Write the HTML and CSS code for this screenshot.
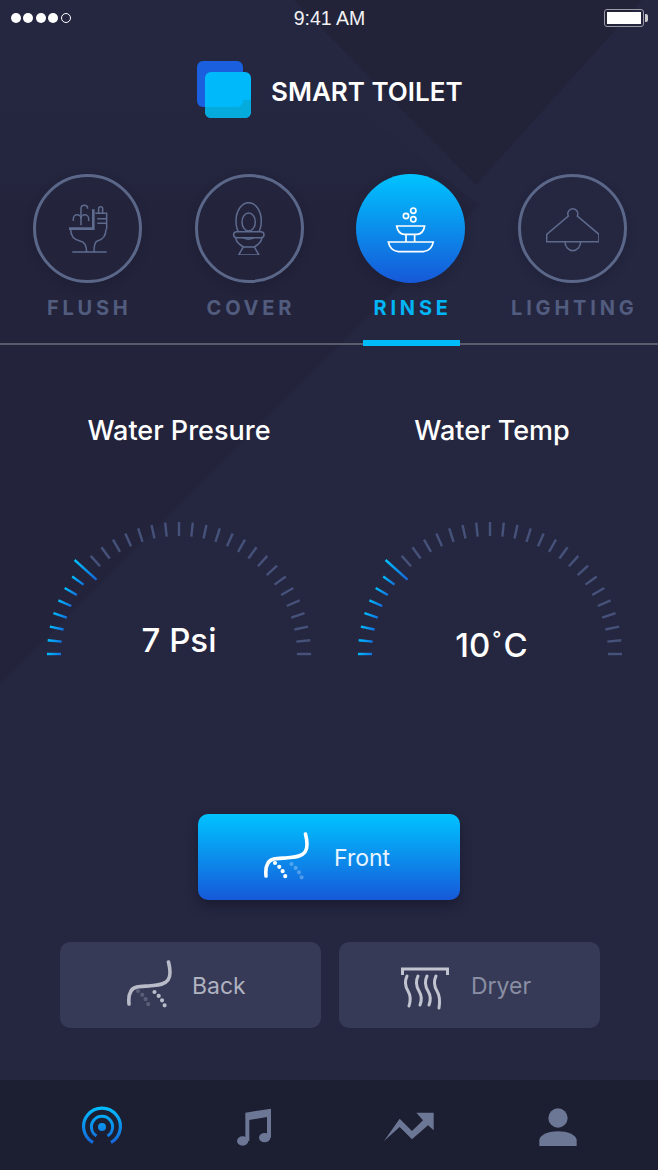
FILE: index.html
```html
<!DOCTYPE html>
<html lang="en">
  <head>
    <meta charset="UTF-8" />
    <meta name="viewport" content="width=device-width, initial-scale=1.0" />
    <title>Smart Toilet</title>

    <link rel="stylesheet" href="styles.css">
  </head>

  <body>
    <!-- shared svg parts -->
    <svg class="defs" width="0" height="0">
      <defs>
        <linearGradient id="tickActive" gradientUnits="userSpaceOnUse" x1="9" y1="0" x2="23" y2="0">
          <stop offset="0" stop-color="#00bdff" />
          <stop offset="1" stop-color="#1272e0" />
        </linearGradient>
        <linearGradient id="tickLong" gradientUnits="userSpaceOnUse" x1="0" y1="0" x2="30" y2="0">
          <stop offset="0" stop-color="#00c3ff" />
          <stop offset="1" stop-color="#1565d8" />
        </linearGradient>
        <linearGradient id="navBlue" gradientUnits="userSpaceOnUse" x1="0" y1="-20" x2="0" y2="17">
          <stop offset="0" stop-color="#00bdff" />
          <stop offset="1" stop-color="#1565d8" />
        </linearGradient>
        <linearGradient id="facetFade" gradientUnits="userSpaceOnUse" x1="0" y1="90" x2="0" y2="210">
          <stop offset="0" stop-color="#252741" />
          <stop offset="1" stop-color="#23243c" />
        </linearGradient>
        <symbol id="gauge" viewBox="0 0 282 144">
          <g class="ticks-on" stroke="url(#tickActive)">
            <line x1="9" y1="141" x2="23" y2="141" />
            <line x1="9" y1="141" x2="23" y2="141" transform="rotate(6 141 141)" />
            <line x1="9" y1="141" x2="23" y2="141" transform="rotate(12 141 141)" />
            <line x1="9" y1="141" x2="23" y2="141" transform="rotate(18 141 141)" />
            <line x1="9" y1="141" x2="23" y2="141" transform="rotate(24 141 141)" />
            <line x1="9" y1="141" x2="23" y2="141" transform="rotate(30 141 141)" />
            <line x1="9" y1="141" x2="23" y2="141" transform="rotate(36 141 141)" />
            <line x1="0.5" y1="141" x2="30" y2="141" stroke="url(#tickLong)" transform="rotate(42 141 141)" />
          </g>
          <g class="ticks-off">
            <line x1="9" y1="141" x2="23" y2="141" transform="rotate(48 141 141)" />
            <line x1="9" y1="141" x2="23" y2="141" transform="rotate(54 141 141)" />
            <line x1="9" y1="141" x2="23" y2="141" transform="rotate(60 141 141)" />
            <line x1="9" y1="141" x2="23" y2="141" transform="rotate(66 141 141)" />
            <line x1="9" y1="141" x2="23" y2="141" transform="rotate(72 141 141)" />
            <line x1="9" y1="141" x2="23" y2="141" transform="rotate(78 141 141)" />
            <line x1="9" y1="141" x2="23" y2="141" transform="rotate(84 141 141)" />
            <line x1="9" y1="141" x2="23" y2="141" transform="rotate(90 141 141)" />
            <line x1="9" y1="141" x2="23" y2="141" transform="rotate(96 141 141)" />
            <line x1="9" y1="141" x2="23" y2="141" transform="rotate(102 141 141)" />
            <line x1="9" y1="141" x2="23" y2="141" transform="rotate(108 141 141)" />
            <line x1="9" y1="141" x2="23" y2="141" transform="rotate(114 141 141)" />
            <line x1="9" y1="141" x2="23" y2="141" transform="rotate(120 141 141)" />
            <line x1="9" y1="141" x2="23" y2="141" transform="rotate(126 141 141)" />
            <line x1="9" y1="141" x2="23" y2="141" transform="rotate(132 141 141)" />
            <line x1="9" y1="141" x2="23" y2="141" transform="rotate(138 141 141)" />
            <line x1="9" y1="141" x2="23" y2="141" transform="rotate(144 141 141)" />
            <line x1="9" y1="141" x2="23" y2="141" transform="rotate(150 141 141)" />
            <line x1="9" y1="141" x2="23" y2="141" transform="rotate(156 141 141)" />
            <line x1="9" y1="141" x2="23" y2="141" transform="rotate(162 141 141)" />
            <line x1="9" y1="141" x2="23" y2="141" transform="rotate(168 141 141)" />
            <line x1="9" y1="141" x2="23" y2="141" transform="rotate(174 141 141)" />
            <line x1="9" y1="141" x2="23" y2="141" transform="rotate(180 141 141)" />
          </g>
        </symbol>
      </defs>
    </svg>

    <div class="phone">
      <svg class="backdrop" viewBox="0 0 658 1080" width="658" height="1080">
        <polygon class="facet" points="0,685 480,205 300,60 0,60" />
        <polygon class="facet-dark" points="294,0 476,185 642,0" />
      </svg>

      <div class="status-bar">
        <div class="signal">
          <span class="dot"></span>
          <span class="dot"></span>
          <span class="dot"></span>
          <span class="dot"></span>
          <span class="dot empty"></span>
        </div>
        <div class="clock">9:41 AM</div>
        <div class="battery"><span class="battery-fill"></span></div>
      </div>

      <header class="brand">
        <svg class="brand-logo" width="56" height="58" viewBox="0 0 56 58">
          <rect x="1" y="1" width="46" height="46" rx="6" fill="#1a5fdd" />
          <rect x="9" y="12" width="46" height="46" rx="6" fill="#00b9fb" />
          <path d="M9 47 V52 a6 6 0 0 0 6 6 H49 a6 6 0 0 0 6 -6 V40 H47 V41 a6 6 0 0 1 -6 6 Z" fill="#06abde" />
        </svg>
        <h1>SMART TOILET</h1>
      </header>

      <nav class="tabs">
        <div class="tab">
          <div class="tab-circle">
            <svg class="tab-icon" width="53.3" height="53.3" viewBox="123 108 160 160">
              <path d="M157 258 H260" />
              <path d="M147 188 H220 V130" class="thick" />
              <path d="M152 190 C152 212 165 222 180 225 C196 228 200 240 200 258" />
              <path d="M258 190 C258 212 245 222 232 225 C224 228 222 240 222 258" />
              <path d="M226 142 H260 V190 M236 142 V128 A6 6 0 0 1 248 128 V142 M232 158 H258 M232 172 H258" />
              <path d="M183 178 V128 A10 10 0 0 1 203 128" />
              <path d="M160 165 V158 A11.5 11.5 0 0 1 183 158 M183 158 A11.5 11.5 0 0 1 206 158 V165" />
            </svg>
          </div>
          <div class="tab-label">FLUSH</div>
        </div>
        <div class="tab">
          <div class="tab-circle">
            <svg class="tab-icon" width="53.3" height="53.3" viewBox="607 108 160 160">
              <ellipse cx="687" cy="165" rx="38" ry="55" />
              <ellipse cx="687" cy="168" rx="20" ry="27" />
              <rect x="642" y="197" width="91" height="18" rx="9" fill="#222339" />
              <path d="M648 215 C650 232 662 238 672 243 H703 C713 238 725 232 727 215" />
              <path d="M671 243 L657 267 H718 L704 243" />
            </svg>
          </div>
          <div class="tab-label">COVER</div>
        </div>
        <div class="tab active">
          <div class="tab-circle">
            <svg class="tab-icon" width="53.3" height="53.3" viewBox="132 108 160 160">
              <circle cx="220" cy="134" r="8" />
              <circle cx="198" cy="150" r="8" />
              <circle cx="220" cy="160" r="8" />
              <path d="M170 180 H254 Q250 203 232 205 H192 Q174 203 170 180 Z" />
              <path d="M198 205 V228 M224 205 V228" />
              <path d="M145 228 H280 Q275 255 250 257 H175 Q150 255 145 228 Z" />
            </svg>
          </div>
          <div class="tab-label">RINSE</div>
        </div>
        <div class="tab">
          <div class="tab-circle">
            <svg class="tab-icon" width="53.3" height="53.3" viewBox="618 108 160 160">
              <path d="M685 150 A15 15 0 1 1 712 150 L777 205 V227 H620 V205 Z" />
              <path d="M675 227 A23.5 27 0 0 0 722 227" />
            </svg>
          </div>
          <div class="tab-label">LIGHTING</div>
        </div>
      </nav>

      <div class="tabs-line"><span class="tabs-indicator"></span></div>

      <section class="gauges">
        <div class="gauge-card">
          <h2>Water Presure</h2>
          <div class="gauge">
            <svg width="282" height="144"><use href="#gauge" /></svg>
            <div class="gauge-value">7 Psi</div>
          </div>
        </div>
        <div class="gauge-card gauge-temp">
          <h2>Water Temp</h2>
          <div class="gauge">
            <svg width="282" height="144"><use href="#gauge" /></svg>
            <div class="gauge-value temp-value">10<span class="deg">°</span>C</div>
          </div>
        </div>
      </section>

      <section class="modes">
        <button class="mode mode-front">
          <svg class="mode-icon" width="48" height="50" viewBox="0 0 48 50">
            <path class="curve" d="M43.5 2 C45.5 10 46 16 43 20 C39 25.5 31 25 24 26 C16 26.5 9 26 6 31 C3.5 35 3.5 39 4 44" />
            <path class="spray" d="M13 31 Q22 38 24.5 48" />
            <path class="spray faint" d="M29.5 32 Q38 39 40.5 48" />
          </svg>
          <span>Front</span>
        </button>
        <div class="mode-row">
          <button class="mode mode-back">
            <svg class="mode-icon" width="48" height="50" viewBox="0 0 48 50">
              <path class="curve" d="M43.5 2 C45.5 10 46 16 43 20 C39 25.5 31 25 24 26 C16 26.5 9 26 6 31 C3.5 35 3.5 39 4 44" />
              <path class="spray faint" d="M13 31 Q22 38 24.5 48" />
              <path class="spray" d="M29.5 32 Q38 39 40.5 48" />
            </svg>
            <span>Back</span>
          </button>
          <button class="mode mode-dryer">
            <svg class="mode-icon" width="48" height="44" viewBox="0 0 48 44">
              <path class="dryer-bar" d="M1.5 8 V2 H46.5 V8" />
              <path class="curve" d="M6 9 C3 15 4 19 7 24 C10 29 10 33 8 39" />
              <path class="curve" d="M17 9 C14 15 15 19 18 24 C21 29 21 33 19 38" />
              <path class="curve" d="M26 9 C23 15 24 19 27 24 C30 29 30 33 28 38" />
              <path class="curve" d="M35 9 C32 15 33 19 36 24 C39 29 39 35 38 41" />
            </svg>
            <span>Dryer</span>
          </button>
        </div>
      </section>

      <footer class="bottom-nav">
        <div class="nav-item">
          <svg width="42" height="42" viewBox="-21 -21 42 42">
            <path class="nav-ring" d="M-9 15.5 A18.4 18.4 0 1 1 9 15.5" stroke-width="3.2" />
            <path class="nav-ring" d="M-5.5 9 A10.6 10.6 0 1 1 5.5 9" stroke-width="3" />
            <circle r="4" fill="url(#navBlue)" />
          </svg>
        </div>
        <div class="nav-item">
          <svg width="36" height="38" viewBox="564 98 104 114">
            <path class="nav-fill" d="M590 197 V112 L667 100 V187 H655 V125 L602 134 V197 Z" />
            <ellipse class="nav-fill" cx="582" cy="197" rx="17" ry="14" />
            <ellipse class="nav-fill" cx="648" cy="187" rx="17" ry="14" />
          </svg>
        </div>
        <div class="nav-item nav-trend">
          <svg width="50" height="30" viewBox="73 125 150 90">
            <polygon class="nav-fill" points="73,212 120,145 157,182 190,150 170,127 222,127 222,180 205,165 157,207 120,170" />
          </svg>
        </div>
        <div class="nav-item">
          <svg width="38" height="38" viewBox="539 98 114 114">
            <circle class="nav-fill" cx="596" cy="128" r="29" />
            <path class="nav-fill" d="M540 212 V195 C540 178 570 168 596 168 C622 168 652 178 652 195 V212 Z" />
          </svg>
        </div>
      </footer>
    </div>
  </body>
</html>
```

FILE: styles.css
```css
/* General Reset */
* {
  margin: 0;
  padding: 0;
  box-sizing: border-box;
  font-family: "Inter", "Liberation Sans", sans-serif;
}

body {
  background: #252741;
  color: #ffffff;
}

.defs {
  position: absolute;
}

.phone {
  position: relative;
  width: 658px;
  height: 1170px;
  overflow: hidden;
  display: flex;
  flex-direction: column;
}

.backdrop {
  position: absolute;
  top: 0;
  left: 0;
}

.facet {
  fill: url(#facetFade);
}

.facet-dark {
  fill: #222339;
}

/* Status bar */
.status-bar {
  position: relative;
  height: 36px;
  display: grid;
  grid-template-columns: 1fr auto 1fr;
  align-items: center;
  padding: 0 10px 0 11px;
}

.signal {
  display: flex;
  gap: 2.4px;
}

.dot {
  width: 10px;
  height: 10px;
  border-radius: 50%;
  background: #ffffff;
}

.dot.empty {
  background: none;
  border: 1px solid #ffffff;
}

.clock {
  font-family: "Liberation Sans", sans-serif;
  font-size: 19.5px;
  color: #f2f2f5;
}

.battery {
  position: relative;
  justify-self: end;
  width: 40px;
  height: 18px;
  padding: 2px;
  border: 1px solid #9a9aa4;
  border-radius: 3px;
  margin-right: 4px;
}

.battery::after {
  content: "";
  position: absolute;
  top: 4px;
  right: -5px;
  width: 3px;
  height: 8px;
  background: #c9c9d0;
  border-radius: 0 2px 2px 0;
}

.battery-fill {
  display: block;
  height: 100%;
  background: #ffffff;
}

/* Brand */
.brand {
  position: relative;
  display: flex;
  align-items: flex-start;
  padding: 24px 0 0 196px;
  height: 138px;
}

.brand-logo {
  flex: none;
}

.brand h1 {
  font-size: 26px;
  font-weight: 600;
  margin: 15px 0 0 19px;
  line-height: 34px;
  color: #ffffff;
  white-space: nowrap;
}

/* Tabs */
.tabs {
  position: relative;
  display: grid;
  grid-template-columns: repeat(4, 161.7px);
  padding-left: 6.5px;
}

.tab {
  display: flex;
  flex-direction: column;
  align-items: center;
}

.tab-circle {
  width: 109px;
  height: 109px;
  border-radius: 50%;
  border: 3.5px solid #5b6789;
  display: flex;
  align-items: center;
  justify-content: center;
  box-shadow: 0 4px 10px rgba(20, 21, 35, 0.25);
}

.tab-icon {
  fill: none;
  stroke: #5f6b8e;
  stroke-width: 4.5;
}

.tab-icon .thick {
  stroke-width: 8;
}

.tab.active .tab-circle {
  border: none;
  background: linear-gradient(180deg, #00c4ff, #1658d8);
}

.tab.active .tab-icon {
  stroke: #ffffff;
  stroke-width: 5;
}

.tab-label {
  margin-top: 12px;
  font-size: 20px;
  line-height: 26px;
  font-weight: 700;
  letter-spacing: 3.8px;
  text-indent: 3.8px;
  color: #525c7e;
  white-space: nowrap;
}

.tab.active .tab-label {
  color: #00b5f6;
}

.tabs-line {
  position: relative;
  height: 2px;
  margin-top: 22px;
  background: #5a5b6c;
}

.tabs-indicator {
  position: absolute;
  left: 363px;
  top: -3px;
  width: 97px;
  height: 6px;
  background: #00bcf8;
}

/* Gauges */
.gauges {
  position: relative;
  display: flex;
  padding: 68px 0 0 38px;
}

.gauge-card {
  display: flex;
  flex-direction: column;
  align-items: center;
  width: 282px;
}

.gauge-temp {
  margin-left: 28.5px;
}

.gauge-card h2 {
  font-size: 27px;
  font-weight: 500;
  line-height: 36px;
  white-space: nowrap;
}

.gauge-temp h2 {
  margin-left: 5px;
}

.gauge {
  position: relative;
  margin-top: 64px;
  height: 144px;
}

.ticks-on line,
.ticks-off line {
  stroke-width: 2.4;
}

.ticks-off {
  stroke: #46527a;
}

.gauge-value {
  position: absolute;
  left: 0;
  right: 0;
  bottom: -4px;
  text-align: center;
  font-size: 33px;
  line-height: 42px;
  font-weight: 500;
}

.temp-value {
  bottom: -9px;
  padding-left: 4px;
}

.deg {
  font-size: 20px;
  vertical-align: 11px;
  line-height: 0;
  margin: 0 2px;
}

/* Mode buttons */
.modes {
  position: relative;
  margin-top: 157px;
  display: flex;
  flex-direction: column;
  align-items: center;
  gap: 42px;
}

.mode {
  display: flex;
  align-items: center;
  width: 261px;
  height: 86px;
  border: none;
  border-radius: 10px;
  background: #363a57;
  color: #b0b2c0;
  font-size: 23px;
}

.mode span {
  margin-top: 2px;
}

.mode-icon {
  flex: none;
}

.mode-front {
  width: 262px;
  padding-left: 64px;
  gap: 24px;
  background: linear-gradient(180deg, #00c3ff, #1659d9);
  color: #e8f4ff;
  box-shadow: 0 6px 12px rgba(15, 16, 30, 0.45);
}

.mode-back {
  padding-left: 65px;
  gap: 19px;
}

.mode-dryer {
  padding-left: 62px;
  gap: 22px;
  color: #8a8ea3;
}

.mode-dryer .mode-icon {
  margin-top: 8px;
}

.mode-row {
  display: flex;
  gap: 18px;
  margin-left: 2px;
}

.curve {
  fill: none;
  stroke: #ffffff;
  stroke-width: 3.6;
  stroke-linecap: round;
}

.spray {
  fill: none;
  stroke: #ffffff;
  stroke-width: 4.2;
  stroke-linecap: round;
  stroke-dasharray: 0 5.6;
}

.spray.faint {
  opacity: 0.28;
}

.mode-back .curve,
.mode-back .spray {
  stroke: #b9bbc8;
}

.mode-dryer .curve {
  stroke: #c2c4d0;
  stroke-width: 3;
}

.dryer-bar {
  fill: none;
  stroke: #c2c4d0;
  stroke-width: 3;
}

/* Bottom nav */
.bottom-nav {
  position: absolute;
  left: 0;
  right: 0;
  bottom: 0;
  height: 90px;
  padding: 4px 0 0 26px;
  display: grid;
  grid-template-columns: repeat(4, 152px);
  background: #1c1e31;
  align-items: center;
  justify-items: center;
}

.nav-item {
  display: flex;
}

.nav-trend {
  margin-left: 6px;
}

.nav-ring {
  fill: none;
  stroke: url(#navBlue);
}

.nav-fill {
  fill: #6c7796;
}
```
